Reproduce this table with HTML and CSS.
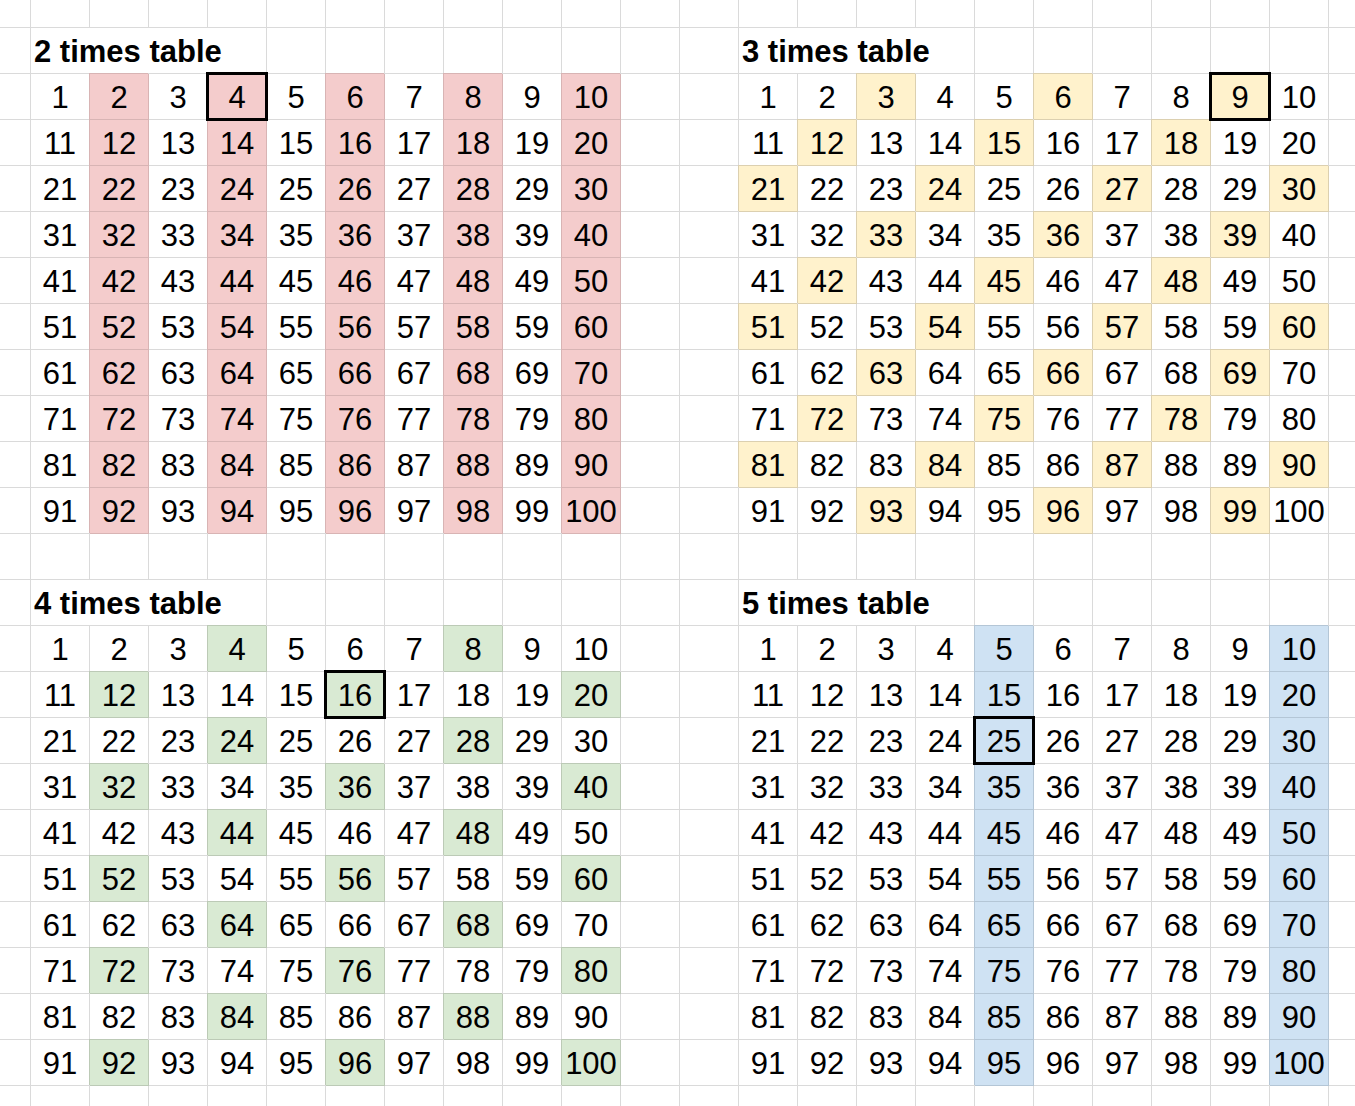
FILE: index.html
```html
<!DOCTYPE html>
<html lang="en">
<head>
<meta charset="utf-8">
<title>Times tables</title>
<link rel="stylesheet" href="styles.css">
</head>
<body>
<main class="sheet">
  <section class="tt red">
    <h2 class="title">2 times table</h2>
    <div class="grid">
      <span>1</span><span class="m">2</span><span>3</span><span class="m s">4</span><span>5</span><span class="m">6</span><span>7</span><span class="m">8</span><span>9</span><span class="m">10</span>
      <span>11</span><span class="m">12</span><span>13</span><span class="m">14</span><span>15</span><span class="m">16</span><span>17</span><span class="m">18</span><span>19</span><span class="m">20</span>
      <span>21</span><span class="m">22</span><span>23</span><span class="m">24</span><span>25</span><span class="m">26</span><span>27</span><span class="m">28</span><span>29</span><span class="m">30</span>
      <span>31</span><span class="m">32</span><span>33</span><span class="m">34</span><span>35</span><span class="m">36</span><span>37</span><span class="m">38</span><span>39</span><span class="m">40</span>
      <span>41</span><span class="m">42</span><span>43</span><span class="m">44</span><span>45</span><span class="m">46</span><span>47</span><span class="m">48</span><span>49</span><span class="m">50</span>
      <span>51</span><span class="m">52</span><span>53</span><span class="m">54</span><span>55</span><span class="m">56</span><span>57</span><span class="m">58</span><span>59</span><span class="m">60</span>
      <span>61</span><span class="m">62</span><span>63</span><span class="m">64</span><span>65</span><span class="m">66</span><span>67</span><span class="m">68</span><span>69</span><span class="m">70</span>
      <span>71</span><span class="m">72</span><span>73</span><span class="m">74</span><span>75</span><span class="m">76</span><span>77</span><span class="m">78</span><span>79</span><span class="m">80</span>
      <span>81</span><span class="m">82</span><span>83</span><span class="m">84</span><span>85</span><span class="m">86</span><span>87</span><span class="m">88</span><span>89</span><span class="m">90</span>
      <span>91</span><span class="m">92</span><span>93</span><span class="m">94</span><span>95</span><span class="m">96</span><span>97</span><span class="m">98</span><span>99</span><span class="m">100</span>
    </div>
  </section>

  <section class="tt yellow">
    <h2 class="title">3 times table</h2>
    <div class="grid">
      <span>1</span><span>2</span><span class="m">3</span><span>4</span><span>5</span><span class="m">6</span><span>7</span><span>8</span><span class="m s">9</span><span>10</span>
      <span>11</span><span class="m">12</span><span>13</span><span>14</span><span class="m">15</span><span>16</span><span>17</span><span class="m">18</span><span>19</span><span>20</span>
      <span class="m">21</span><span>22</span><span>23</span><span class="m">24</span><span>25</span><span>26</span><span class="m">27</span><span>28</span><span>29</span><span class="m">30</span>
      <span>31</span><span>32</span><span class="m">33</span><span>34</span><span>35</span><span class="m">36</span><span>37</span><span>38</span><span class="m">39</span><span>40</span>
      <span>41</span><span class="m">42</span><span>43</span><span>44</span><span class="m">45</span><span>46</span><span>47</span><span class="m">48</span><span>49</span><span>50</span>
      <span class="m">51</span><span>52</span><span>53</span><span class="m">54</span><span>55</span><span>56</span><span class="m">57</span><span>58</span><span>59</span><span class="m">60</span>
      <span>61</span><span>62</span><span class="m">63</span><span>64</span><span>65</span><span class="m">66</span><span>67</span><span>68</span><span class="m">69</span><span>70</span>
      <span>71</span><span class="m">72</span><span>73</span><span>74</span><span class="m">75</span><span>76</span><span>77</span><span class="m">78</span><span>79</span><span>80</span>
      <span class="m">81</span><span>82</span><span>83</span><span class="m">84</span><span>85</span><span>86</span><span class="m">87</span><span>88</span><span>89</span><span class="m">90</span>
      <span>91</span><span>92</span><span class="m">93</span><span>94</span><span>95</span><span class="m">96</span><span>97</span><span>98</span><span class="m">99</span><span>100</span>
    </div>
  </section>

  <section class="tt green">
    <h2 class="title">4 times table</h2>
    <div class="grid">
      <span>1</span><span>2</span><span>3</span><span class="m">4</span><span>5</span><span>6</span><span>7</span><span class="m">8</span><span>9</span><span>10</span>
      <span>11</span><span class="m">12</span><span>13</span><span>14</span><span>15</span><span class="m s">16</span><span>17</span><span>18</span><span>19</span><span class="m">20</span>
      <span>21</span><span>22</span><span>23</span><span class="m">24</span><span>25</span><span>26</span><span>27</span><span class="m">28</span><span>29</span><span>30</span>
      <span>31</span><span class="m">32</span><span>33</span><span>34</span><span>35</span><span class="m">36</span><span>37</span><span>38</span><span>39</span><span class="m">40</span>
      <span>41</span><span>42</span><span>43</span><span class="m">44</span><span>45</span><span>46</span><span>47</span><span class="m">48</span><span>49</span><span>50</span>
      <span>51</span><span class="m">52</span><span>53</span><span>54</span><span>55</span><span class="m">56</span><span>57</span><span>58</span><span>59</span><span class="m">60</span>
      <span>61</span><span>62</span><span>63</span><span class="m">64</span><span>65</span><span>66</span><span>67</span><span class="m">68</span><span>69</span><span>70</span>
      <span>71</span><span class="m">72</span><span>73</span><span>74</span><span>75</span><span class="m">76</span><span>77</span><span>78</span><span>79</span><span class="m">80</span>
      <span>81</span><span>82</span><span>83</span><span class="m">84</span><span>85</span><span>86</span><span>87</span><span class="m">88</span><span>89</span><span>90</span>
      <span>91</span><span class="m">92</span><span>93</span><span>94</span><span>95</span><span class="m">96</span><span>97</span><span>98</span><span>99</span><span class="m">100</span>
    </div>
  </section>

  <section class="tt blue">
    <h2 class="title">5 times table</h2>
    <div class="grid">
      <span>1</span><span>2</span><span>3</span><span>4</span><span class="m">5</span><span>6</span><span>7</span><span>8</span><span>9</span><span class="m">10</span>
      <span>11</span><span>12</span><span>13</span><span>14</span><span class="m">15</span><span>16</span><span>17</span><span>18</span><span>19</span><span class="m">20</span>
      <span>21</span><span>22</span><span>23</span><span>24</span><span class="m s">25</span><span>26</span><span>27</span><span>28</span><span>29</span><span class="m">30</span>
      <span>31</span><span>32</span><span>33</span><span>34</span><span class="m">35</span><span>36</span><span>37</span><span>38</span><span>39</span><span class="m">40</span>
      <span>41</span><span>42</span><span>43</span><span>44</span><span class="m">45</span><span>46</span><span>47</span><span>48</span><span>49</span><span class="m">50</span>
      <span>51</span><span>52</span><span>53</span><span>54</span><span class="m">55</span><span>56</span><span>57</span><span>58</span><span>59</span><span class="m">60</span>
      <span>61</span><span>62</span><span>63</span><span>64</span><span class="m">65</span><span>66</span><span>67</span><span>68</span><span>69</span><span class="m">70</span>
      <span>71</span><span>72</span><span>73</span><span>74</span><span class="m">75</span><span>76</span><span>77</span><span>78</span><span>79</span><span class="m">80</span>
      <span>81</span><span>82</span><span>83</span><span>84</span><span class="m">85</span><span>86</span><span>87</span><span>88</span><span>89</span><span class="m">90</span>
      <span>91</span><span>92</span><span>93</span><span>94</span><span class="m">95</span><span>96</span><span>97</span><span>98</span><span>99</span><span class="m">100</span>
    </div>
  </section>
</main>
</body>
</html>
```
FILE: styles.css
```css
html, body {
  margin: 0;
  height: 100%;
}

body {
  overflow: hidden;
  background-color: #fff;
  background-image:
    linear-gradient(to right, #dadada 1px, transparent 1px),
    linear-gradient(to bottom, #dadada 1px, transparent 1px);
  background-size: 59px 46px;
  background-position: 30px 27px;
  font-family: "Liberation Sans", Arial, sans-serif;
  color: #000;
}

.sheet {
  display: grid;
  grid-template-columns: 590px 590px;
  column-gap: 118px;
  row-gap: 46px;
  padding: 28px 0 0 31px;
}

.tt {
  display: flex;
  flex-direction: column;
}

.red    { --fill: #f4cccc; --ln: #d8b4b4; }
.yellow { --fill: #fff2cc; --ln: #dcd0b0; }
.green  { --fill: #d9ead3; --ln: #bccab6; }
.blue   { --fill: #cfe2f3; --ln: #b4c6d6; }

.title {
  box-sizing: border-box;
  margin: 0 0 1px 0;
  width: 235px;
  height: 45px;
  padding: 1px 0 0 3px;
  background: #fff;
  font-size: 31px;
  font-weight: 700;
  line-height: 46px;
  white-space: nowrap;
}

.grid {
  display: grid;
  grid-template-columns: repeat(10, 59px);
  grid-auto-rows: 46px;
}

.grid span {
  box-sizing: border-box;
  padding: 1px 1px 0 0;
  font-size: 31px;
  line-height: 46px;
  text-align: center;
  white-space: nowrap;
}

.grid .m {
  background: var(--fill);
  box-shadow: inset -1px -1px 0 var(--ln), -1px -1px 0 var(--ln);
}

.grid .s {
  position: relative;
}

.grid .s::after {
  content: "";
  position: absolute;
  inset: -2px -1px -1px -2px;
  border: 3px solid #000;
}
```
